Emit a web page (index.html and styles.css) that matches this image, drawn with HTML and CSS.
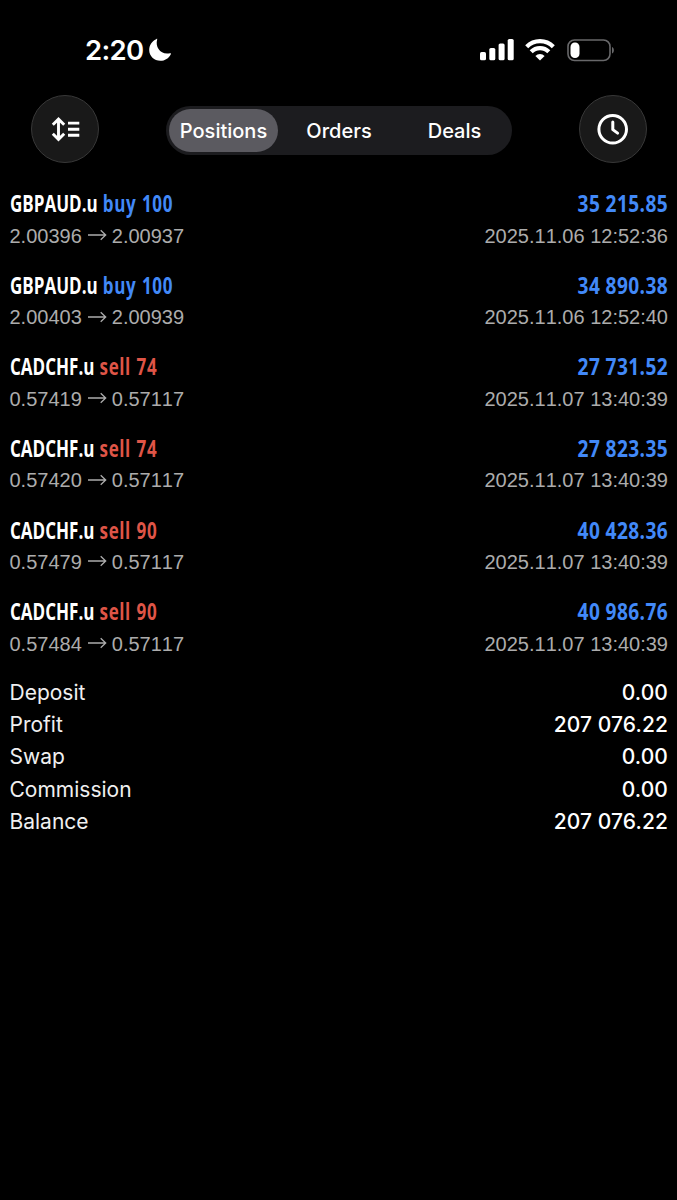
FILE: index.html
```html
<!DOCTYPE html>
<html lang="en">
<head>
<meta charset="utf-8">
<title>History</title>
<link rel="stylesheet" href="styles.css">
</head>
<body>
<div class="statusbar">
  <div class="clock"><span class="time">2:20</span>
    <svg class="moon" width="24" height="24" viewBox="0 0 24 24"><path d="M9.2 1.2C6.8 9.2 13 17.4 22 15.2c.8-.2 1.2.3.8 1C20.800 20.300 16.800 22.800 12.400 22.800 6.200 22.800 1.200 18 1.200 12 1.200 7.200 4 3.200 8.200 1.200c.7-.4 1.200-.5 1 0z" fill="#fff"/></svg>
  </div>
  <div class="indicators">
    <svg width="34" height="22" viewBox="0 0 34 22" fill="#fff"><rect x="0" y="13" width="6" height="8.300" rx="1.600"/><rect x="9.300" y="9" width="6" height="12.300" rx="1.600"/><rect x="18.600" y="4.400" width="6" height="16.900" rx="1.600"/><rect x="27.700" y="0" width="6" height="21.300" rx="1.600"/></svg>
    <svg class="wifi" width="30" height="22" viewBox="0 0 30 22" fill="none" stroke="#fff" stroke-width="4.200"><path d="M1.700 7.700a18.600 18.600 0 0 1 26.600 0"/><path d="M6.200 12.800a12.200 12.200 0 0 1 17.600 0"/><path d="M15 21.600l-4.600-4.600a6.500 6.500 0 0 1 9.200 0z" fill="#fff" stroke="none"/></svg>
    <svg class="battery" width="48" height="23" viewBox="0 0 48 23"><rect x="1" y="1" width="42" height="20.500" rx="6.500" fill="none" stroke="#68686a" stroke-width="1.600"/><rect x="3.500" y="3.600" width="9" height="15.400" rx="4.300" fill="#fff"/><path d="M45 8c2.500.8 2.500 5.800 0 6.600z" fill="#68686a"/></svg>
  </div>
</div>
<div class="toolbar">
  <div class="round"><svg width="66" height="66" viewBox="0 0 66 66" fill="none" stroke="#fff" stroke-width="2.900"><path d="M26.500 23.500v19M20.800 28.800l5.700-5.700 5.700 5.700M20.800 37.700l5.700 5.700 5.700-5.700M36 27.100h11.300M36 33.200h11.300M36 39.300h11.300"/></svg></div>
  <div class="tabs"><span class="tab active">Positions</span><span class="tab">Orders</span><span class="tab">Deals</span></div>
  <div class="round"><svg width="66" height="66" viewBox="0 0 66 66" fill="none" stroke="#fff" stroke-width="3"><circle cx="32.700" cy="33.200" r="13.800"/><path d="M32.800 26v7.600l4.800 3.500" stroke-linecap="round" stroke-linejoin="round"/></svg></div>
</div>
<div class="deals">
  <div class="deal"><div class="line"><span class="name">GBPAUD.u <b class="buy">buy 100</b></span><span class="profit">35 215.85</span></div><div class="line sub"><span class="prices">2.00396<svg class="arrow" viewBox="0 0 19 12"><path d="M0 6h17.500M12.700 1.200l5 4.800-5 4.800"/></svg>2.00937</span><span>2025.11.06 12:52:36</span></div></div>
  <div class="deal"><div class="line"><span class="name">GBPAUD.u <b class="buy">buy 100</b></span><span class="profit">34 890.38</span></div><div class="line sub"><span class="prices">2.00403<svg class="arrow" viewBox="0 0 19 12"><path d="M0 6h17.500M12.700 1.200l5 4.800-5 4.800"/></svg>2.00939</span><span>2025.11.06 12:52:40</span></div></div>
  <div class="deal"><div class="line"><span class="name">CADCHF.u <b class="sell">sell 74</b></span><span class="profit">27 731.52</span></div><div class="line sub"><span class="prices">0.57419<svg class="arrow" viewBox="0 0 19 12"><path d="M0 6h17.500M12.700 1.200l5 4.800-5 4.800"/></svg>0.57117</span><span>2025.11.07 13:40:39</span></div></div>
  <div class="deal"><div class="line"><span class="name">CADCHF.u <b class="sell">sell 74</b></span><span class="profit">27 823.35</span></div><div class="line sub"><span class="prices">0.57420<svg class="arrow" viewBox="0 0 19 12"><path d="M0 6h17.500M12.700 1.200l5 4.800-5 4.800"/></svg>0.57117</span><span>2025.11.07 13:40:39</span></div></div>
  <div class="deal"><div class="line"><span class="name">CADCHF.u <b class="sell">sell 90</b></span><span class="profit">40 428.36</span></div><div class="line sub"><span class="prices">0.57479<svg class="arrow" viewBox="0 0 19 12"><path d="M0 6h17.500M12.700 1.200l5 4.800-5 4.800"/></svg>0.57117</span><span>2025.11.07 13:40:39</span></div></div>
  <div class="deal"><div class="line"><span class="name">CADCHF.u <b class="sell">sell 90</b></span><span class="profit">40 986.76</span></div><div class="line sub"><span class="prices">0.57484<svg class="arrow" viewBox="0 0 19 12"><path d="M0 6h17.500M12.700 1.200l5 4.800-5 4.800"/></svg>0.57117</span><span>2025.11.07 13:40:39</span></div></div>
</div>
<div class="summary">
  <div class="total"><span>Deposit</span><span class="value">0.00</span></div>
  <div class="total"><span>Profit</span><span class="value">207 076.22</span></div>
  <div class="total"><span>Swap</span><span class="value">0.00</span></div>
  <div class="total"><span>Commission</span><span class="value">0.00</span></div>
  <div class="total"><span>Balance</span><span class="value">207 076.22</span></div>
</div>
</body>
</html>
```
FILE: styles.css
```css
* { box-sizing: border-box; }
body { margin: 0; width: 677px; height: 1200px; overflow: hidden; background: #000; color: #fff; font-family: Inter, sans-serif; }
svg { display: block; flex: none; }
.statusbar { height: 95px; padding: 34px 62px 0 85px; display: flex; justify-content: space-between; align-items: flex-start; }
.clock { display: flex; align-items: center; height: 32px; gap: 5px; }
.time { font-size: 27.5px; font-weight: 600; letter-spacing: -0.700px; }
.indicators { display: flex; align-items: flex-start; padding-top: 5px; }
.wifi { margin-left: 11px; }
.battery { margin-left: 12px; }
.toolbar { height: 68px; padding: 0 30px 0 31px; display: flex; justify-content: space-between; align-items: center; }
.round { width: 68px; height: 68px; border-radius: 50%; background: #191919; border: 1px solid #383838; flex: none; }
.tabs { width: 346px; height: 49px; margin-top: 2px; border-radius: 25px; background: #1c1c1f; padding: 3px; display: grid; grid-template-columns: 109px 122px 109px; }
.tab { display: flex; align-items: center; justify-content: center; padding-top: 1px; font-size: 20px; font-weight: 500; letter-spacing: 0; border-radius: 22px; }
.active { background: #5b5a60; }
.deals { padding: 24.2px 9px 0 9.500px; }
.deal { height: 81.600px; }
.line { height: 32.500px; line-height: 32.500px; display: flex; justify-content: space-between; white-space: nowrap; }
.name, .profit { font-family: "Open Sans", sans-serif; font-size: 23px; font-weight: 700; }
.name { transform: scaleX(0.74); transform-origin: left; word-spacing: 1px; }
.name b { font-weight: 700; letter-spacing: 0.800px; }
.profit { color: #4289f8; transform: scaleX(0.83); transform-origin: right; letter-spacing: 0.500px; margin-right: -0.500px; }
.buy { color: #4289f8; }
.sell { color: #df5547; }
.sub { font-family: "Liberation Sans", sans-serif; font-size: 20px; color: #acacac; font-kerning: none; }
.prices { display: flex; align-items: center; }
.arrow { width: 19px; height: 12px; margin: -2px 5px 0 6px; fill: none; stroke: #acacac; stroke-width: 1.300; }
.summary { padding: 0 9px 0 9.500px; }
.total { height: 32.350px; line-height: 32.350px; display: flex; justify-content: space-between; font-size: 21px; color: #f0f0f0; letter-spacing: 0; }
.value { font-weight: 500; color: #fff; letter-spacing: 0.100px; }
```
